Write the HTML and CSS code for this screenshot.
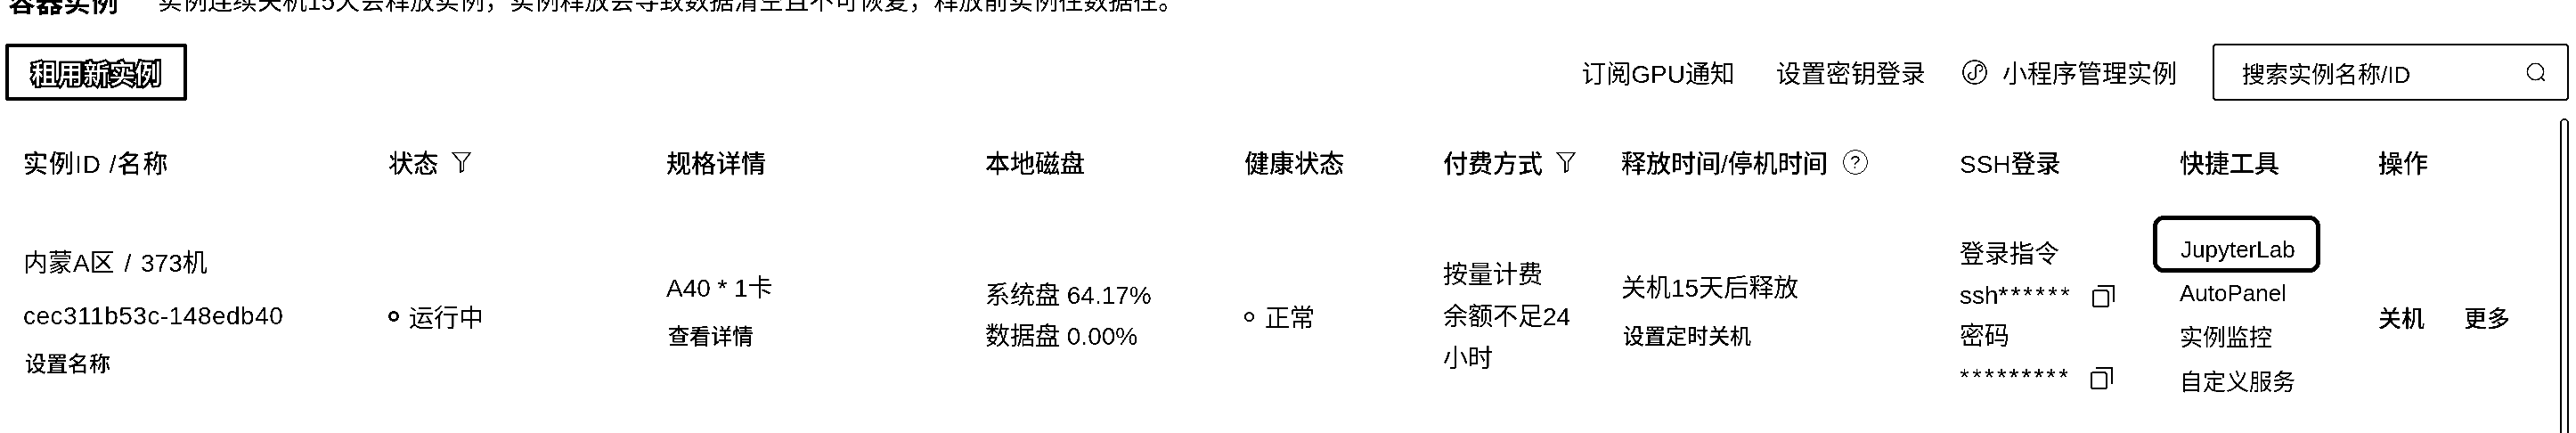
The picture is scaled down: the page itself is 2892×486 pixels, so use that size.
FILE: index.html
```html
<!DOCTYPE html>
<html lang="zh-CN">

<head>
    <meta charset="UTF-8">
    <title>容器实例</title>
    <link rel="stylesheet" href="styles.css">
</head>

<body>
    <div class="page">
        <div class="title-row">
            <span class="title">容器实例</span>
            <span class="title-note">实例连续关机15天会释放实例，实例释放会导致数据清空且不可恢复，释放前实例往数据往。</span>
        </div>

        <div class="toolbar">
            <button class="rent-button">租用新实例</button>
            <div class="toolbar-right">
                <span class="tool-link link-gpu">订阅GPU通知</span>
                <span class="tool-link link-key">设置密钥登录</span>
                <span class="tool-link link-mini">
                    <svg class="mini-icon" viewBox="0 0 28 28" fill="none" stroke="#000" stroke-width="1.6">
                        <circle cx="14" cy="14" r="13"/>
                        <path d="M7 18c0 2.500 1.800 4 4 4 2.400 0 4-1.800 4-4v-8c0-2.200 1.600-4 4-4 2.200 0 3.500 1.600 3.500 3.500 0 2-1.500 3.500-3.500 3.500"/>
                        <path d="M7 18c0-2 1.500-3.500 3.500-3.500"/>
                    </svg>
                    小程序管理实例
                </span>
                <div class="search-box">
                    <span>搜索实例名称/ID</span>
                    <svg class="search-icon" viewBox="0 0 22 22" fill="none" stroke="#000" stroke-width="1.600">
                        <circle cx="10.500" cy="10.500" r="9.200"/>
                        <path d="M17 17l4 4"/>
                    </svg>
                </div>
            </div>
        </div>

        <div class="table-row table-head">
            <div class="head-id">实例ID /名称</div>
            <div class="head-icon">状态
                <svg class="filter-icon" viewBox="0 0 22 24" fill="none" stroke="#000" stroke-width="1.600">
                    <path d="M1 1.500h20l-7.500 10v10l-3.500 1.500v-11.500z"/>
                </svg>
            </div>
            <div>规格详情</div>
            <div>本地磁盘</div>
            <div>健康状态</div>
            <div class="head-icon">付费方式
                <svg class="filter-icon" viewBox="0 0 22 24" fill="none" stroke="#000" stroke-width="1.600">
                    <path d="M1 1.500h20l-7.500 10v10l-3.500 1.500v-11.500z"/>
                </svg>
            </div>
            <div class="head-icon">释放时间/停机时间 <span class="help-icon">?</span></div>
            <div>SSH登录</div>
            <div>快捷工具</div>
            <div>操作</div>
        </div>

        <div class="table-row table-body">
            <div class="cell-name">
                <div class="line-zone">内蒙A区 / 373机</div>
                <div class="line-id">cec311b53c-148edb40</div>
                <div class="sub-link">设置名称</div>
            </div>
            <div class="status"><i class="dot dot-bold"></i>运行中</div>
            <div class="cell-spec">
                <div>A40 * 1卡</div>
                <div class="sub-link">查看详情</div>
            </div>
            <div class="cell-disk">
                <div>系统盘 64.17%</div>
                <div>数据盘 0.00%</div>
            </div>
            <div class="status status-ok"><i class="dot"></i>正常</div>
            <div class="cell-pay">
                <div>按量计费</div>
                <div>余额不足24</div>
                <div>小时</div>
            </div>
            <div class="cell-spec">
                <div>关机15天后释放</div>
                <div class="sub-link">设置定时关机</div>
            </div>
            <div class="cell-ssh">
                <div>登录指令</div>
                <div class="copy-line">ssh<span class="mask">******</span>
                    <svg class="copy-icon" viewBox="0 0 24 24" fill="none" stroke="#000" stroke-width="2">
                        <rect x="1" y="6" width="16" height="17" rx="1.500"/>
                        <path d="M6 1h17v17"/>
                    </svg>
                </div>
                <div>密码</div>
                <div class="copy-line"><span class="mask">*********</span>
                    <svg class="copy-icon" viewBox="0 0 24 24" fill="none" stroke="#000" stroke-width="2">
                        <rect x="1" y="6" width="16" height="17" rx="1.500"/>
                        <path d="M6 1h17v17"/>
                    </svg>
                </div>
            </div>
            <div class="cell-tools">
                <div class="tool-focus">JupyterLab</div>
                <div>AutoPanel</div>
                <div>实例监控</div>
                <div>自定义服务</div>
            </div>
            <div class="cell-actions">
                <span>关机</span>
                <span>更多</span>
            </div>
        </div>

        <div class="scrollbar"></div>
    </div>
</body>

</html>
```

FILE: styles.css
```css
html, body {
    margin: 0;
    height: 100%;
    background: #fff;
}

.page {
    position: relative;
    height: 486px;
    overflow: hidden;
    background: #fff;
    color: #000;
    font-family: "Liberation Sans", "Noto Sans CJK SC", sans-serif;
    font-size: 28px;
    filter: grayscale(1) contrast(6);
}

.title-row {
    display: flex;
    align-items: center;
    height: 40px;
    margin-top: -21px;
    padding-left: 9px;
}

.title {
    width: 168px;
    font-size: 31px;
    font-weight: 700;
}

.toolbar {
    display: flex;
    justify-content: space-between;
    align-items: center;
    height: 64px;
    margin-top: 30px;
    padding: 0 8px 0 6px;
}

.rent-button {
    width: 204px;
    height: 64px;
    padding: 0;
    background: #fff;
    border: 4px solid #000;
    border-radius: 3px;
    font-family: inherit;
    font-size: 29px;
    font-weight: 500;
    color: #fff;
    -webkit-text-stroke: 5px #000;
    paint-order: stroke fill;
}

.toolbar-right {
    display: flex;
    align-items: center;
}

.tool-link {
    display: flex;
    align-items: center;
    white-space: nowrap;
}

.link-gpu {
    margin-right: 46px;
}

.link-key {
    margin-right: 41px;
}

.link-mini {
    margin-right: 40px;
}

.mini-icon {
    width: 28px;
    height: 28px;
    margin-right: 17px;
}

.search-box {
    display: flex;
    justify-content: space-between;
    align-items: center;
    box-sizing: border-box;
    width: 400px;
    height: 64px;
    padding: 0 24px 0 31px;
    border: 2px solid #000;
    border-radius: 4px;
    font-size: 26px;
}

.search-icon {
    width: 22px;
    height: 22px;
}

.table-row {
    display: grid;
    grid-template-columns: 410px 312px 358px 291px 223px 200px 380px 247px 223px 1fr;
    padding-left: 26px;
}

.table-head {
    align-items: center;
    height: 40px;
    margin-top: 49px;
    font-weight: 500;
}

.head-id {
    letter-spacing: 1px;
}

.head-icon {
    display: flex;
    align-items: center;
    white-space: nowrap;
}

.filter-icon {
    width: 22px;
    height: 24px;
    margin-left: 15px;
}

.help-icon {
    display: inline-flex;
    justify-content: center;
    align-items: center;
    box-sizing: border-box;
    width: 28px;
    height: 28px;
    margin-left: 17px;
    border: 1.5px solid #000;
    border-radius: 50%;
    font-size: 20px;
    font-weight: 400;
}

.table-body {
    align-items: center;
    height: 266px;
    margin-top: 20px;
}

.sub-link {
    font-size: 24px;
    font-weight: 500;
}

.cell-name {
    padding-bottom: 10px;
}

.line-zone {
    line-height: 40px;
    word-spacing: 3px;
}

.line-id {
    margin-top: 19px;
    line-height: 40px;
    letter-spacing: 0.5px;
}

.cell-name .sub-link {
    margin: 18px 0 0 2px;
    line-height: 32px;
}

.status {
    display: flex;
    align-items: center;
}

.dot {
    box-sizing: border-box;
    width: 11px;
    height: 11px;
    margin-right: 12px;
    border: 2.5px solid #000;
    border-radius: 50%;
}

.dot-bold {
    width: 12px;
    height: 12px;
    margin-right: 11px;
    border-width: 3.5px;
}

.cell-spec {
    padding-bottom: 12px;
}

.cell-spec > div:first-child {
    line-height: 40px;
}

.cell-spec .sub-link {
    margin: 18px 0 0 2px;
    line-height: 32px;
}

.cell-disk > div {
    line-height: 46px;
}

.cell-pay > div {
    line-height: 47px;
}

.cell-ssh > div {
    line-height: 46px;
    white-space: nowrap;
}

.copy-line {
    display: flex;
    align-items: center;
}

.mask {
    letter-spacing: 3px;
}

.copy-icon {
    width: 25px;
    height: 25px;
    margin-left: 22px;
}

.cell-tools {
    font-size: 26px;
    line-height: 50px;
}

.tool-focus {
    box-sizing: border-box;
    width: 188px;
    height: 64px;
    margin: -14px 0 -2px -30px;
    padding: 12px 0 0 26px;
    border: 5px solid #000;
    border-radius: 12px;
    line-height: 42px;
}

.cell-actions {
    display: flex;
    gap: 44px;
    font-size: 26px;
    font-weight: 500;
}

.scrollbar {
    position: absolute;
    top: 133px;
    left: 2874px;
    box-sizing: border-box;
    width: 10px;
    height: 360px;
    border: 2px solid #000;
    border-radius: 5px;
}
```
